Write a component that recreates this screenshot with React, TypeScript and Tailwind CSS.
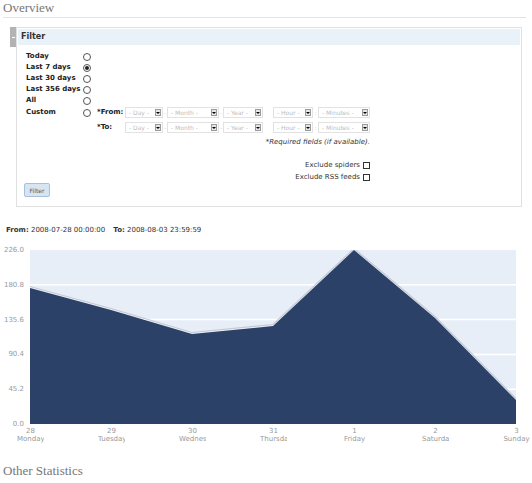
import React from "react";

function Radio({ checked }: { checked?: boolean }) {
  return (
    <span className="flex h-[8px] w-[8px] items-center justify-center rounded-full border border-[#555] bg-white">
      {checked && <span className="h-[4px] w-[4px] rounded-full bg-[#222]" />}
    </span>
  );
}

function Sel({ w, text }: { w: string; text: string }) {
  return (
    <div className={"flex h-[11px] items-center justify-between border border-[#e2e2e2] bg-white pl-[3px] pr-[1px] " + w}>
      <span className="whitespace-nowrap text-[6px] leading-[6px] text-[#bdbdbd]">{text}</span>
      <span className="flex h-[7px] w-[6px] items-center justify-center border border-[#9a9a9a] bg-[#e6e6e6]">
        <svg width="4" height="2" viewBox="0 0 4 2">
          <path d="M0 0h4L2 2z" fill="#000" />
        </svg>
      </span>
    </div>
  );
}

function Sep({ w, c }: { w: string; c: string }) {
  return <span className={"text-center text-[6px] leading-[6px] text-[#cfcfcf] " + w}>{c}</span>;
}

function DateRow({ label }: { label: string }) {
  return (
    <div className="flex h-[11px] items-center">
      <span className="w-[28px] text-[7px] font-bold leading-[11px] text-[#222]">{label}</span>
      <Sel w="w-[38px]" text="- Day -" />
      <Sep w="w-[4px]" c="-" />
      <Sel w="w-[52px]" text="- Month -" />
      <Sep w="w-[4px]" c="-" />
      <Sel w="w-[40px]" text="- Year -" />
      <span className="w-[10px]" />
      <Sel w="w-[40px]" text="- Hour -" />
      <Sep w="w-[5px]" c=":" />
      <Sel w="w-[52px]" text="- Minutes -" />
    </div>
  );
}

function Row({ label, checked }: { label: string; checked?: boolean }) {
  return (
    <div className="flex h-[11px] items-center">
      <span className="w-[57px] text-[7px] font-bold leading-[11px] text-[#222]">{label}</span>
      <Radio checked={checked} />
    </div>
  );
}

const pts: [number, number][] = [
  [30, 288],
  [111, 310],
  [192, 334],
  [273, 326],
  [354, 250],
  [435, 318],
  [516, 400],
];

const xLabels = [
  ["28", "Monday"],
  ["29", "Tuesday"],
  ["30", "Wednesday"],
  ["31", "Thursday"],
  ["1", "Friday"],
  ["2", "Saturday"],
  ["3", "Sunday"],
];

export default function App() {
  const poly = pts.map((p) => p.join(",")).join(" ") + " 516,424 30,424";
  const shadow = pts.map((p) => `${p[0]},${p[1] - 1.5}`).join(" ");
  return (
    <div className="h-[483px] w-[532px] overflow-hidden bg-white font-['DejaVu_Sans',Verdana,sans-serif] text-[#222]">
      <div className="pl-[3px] pt-[1px]">
        <div className="w-[523px] border-b border-[#e3e3e3] pb-[2px] font-['Liberation_Serif',serif] text-[13px] leading-[14px] text-[#777]">
          Overview
        </div>
      </div>

      <div className="ml-[10px] mt-[9px] flex items-start">
        <div className="flex h-[20px] w-[6px] items-center justify-center bg-[#b3b3b3]">
          <div className="h-[1px] w-[3px] bg-white" />
        </div>
        <div className="w-[506px] border border-[#e0e0e0] p-[1px]">
          <div className="flex h-[16px] items-center bg-[#e9f1f9] pl-[3px] text-[8px] font-bold text-[#333]">Filter</div>
          <div className="pb-[8px] pl-[8px] pt-[6px]">
            <Row label="Today" />
            <Row label="Last 7 days" checked />
            <Row label="Last 30 days" />
            <Row label="Last 356 days" />
            <Row label="All" />
            <div className="mt-[1px] flex items-start">
              <div className="flex h-[11px] w-[57px] items-center text-[7px] font-bold text-[#222]">Custom</div>
              <div className="flex h-[11px] items-center">
                <Radio />
              </div>
              <div className="ml-[6px] flex flex-col gap-[4px]">
                <DateRow label="*From:" />
                <DateRow label="*To:" />
              </div>
            </div>
            <div className="w-[344px] text-right">
              <div className="mt-[4px] text-[7px] italic leading-[10px] text-[#333]">*Required fields (if available).</div>
              <div className="mt-[13px] flex h-[10px] items-center justify-end gap-[3px] text-[7px] text-[#333]">
                <span>Exclude spiders</span>
                <span className="h-[7px] w-[7px] border border-[#333] bg-white" />
              </div>
              <div className="mt-[2px] flex h-[10px] items-center justify-end gap-[3px] text-[7px] text-[#333]">
                <span>Exclude RSS feeds</span>
                <span className="h-[7px] w-[7px] border border-[#333] bg-white" />
              </div>
            </div>
            <div className="-ml-[2px] mt-[1px] flex h-[14px] w-[26px] items-center justify-center rounded-[2px] border border-[#a7c1d9] bg-[#d5e5f2] text-[6px] text-[#556]">
              Filter
            </div>
          </div>
        </div>
      </div>

      <div className="ml-[6px] mt-[18px] whitespace-nowrap text-[7px] leading-[10px] text-[#333]">
        <span className="font-bold">From:</span> 2008-07-28 00:00:00
        <span className="ml-[8px] font-bold">To:</span> 2008-08-03 23:59:59
      </div>

      <div className="mt-[11px] flex items-start">
        <div className="flex h-[182px] w-[24px] flex-col justify-between text-right text-[7px] leading-[8px] text-[#999]">
          <span>226.0</span>
          <span>180.8</span>
          <span>135.6</span>
          <span>90.4</span>
          <span>45.2</span>
          <span>0.0</span>
        </div>
        <svg className="ml-[6px] mt-[4px] block" width="486" height="174" viewBox="30 250 486 174">
          <rect x="30" y="250" width="486" height="174" fill="#e8eef7" />
          {[284.8, 319.6, 354.4, 389.2].map((y) => (
            <line key={y} x1="30" x2="516" y1={y} y2={y} stroke="#ffffff" strokeWidth="1.5" />
          ))}
          <polyline points={shadow} fill="none" stroke="#c4c9d3" strokeWidth="1.2" />
          <polygon points={poly} fill="#2b4168" />
        </svg>
      </div>

      <div className="-mt-[1px] flex gap-[54px] pl-[17px]">
        {xLabels.map(([n, d]) => (
          <div key={n} className="w-[27px] overflow-hidden whitespace-nowrap text-center text-[7px] leading-[8px] text-[#999]">
            <div>{n}</div>
            <div>{d}</div>
          </div>
        ))}
      </div>

      <div className="mt-[21px] pl-[3px] font-['Liberation_Serif',serif] text-[13px] leading-[14px] text-[#777]">Other Statistics</div>
    </div>
  );
}
